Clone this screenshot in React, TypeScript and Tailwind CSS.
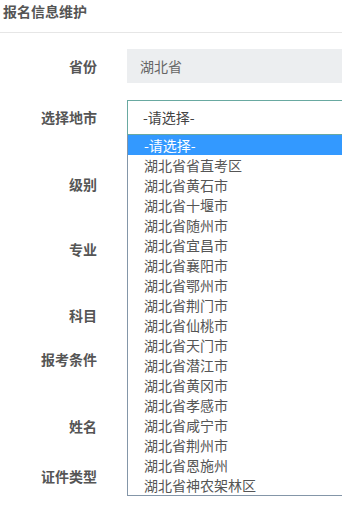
import React from "react";

const cities = [
  "湖北省省直考区",
  "湖北省黄石市",
  "湖北省十堰市",
  "湖北省随州市",
  "湖北省宜昌市",
  "湖北省襄阳市",
  "湖北省鄂州市",
  "湖北省荆门市",
  "湖北省仙桃市",
  "湖北省天门市",
  "湖北省潜江市",
  "湖北省黄冈市",
  "湖北省孝感市",
  "湖北省咸宁市",
  "湖北省荆州市",
  "湖北省恩施州",
  "湖北省神农架林区",
];

const font = { fontFamily: '"Noto Sans CJK SC", "Noto Sans", sans-serif' };

function Label({ children }: { children: React.ReactNode }) {
  return (
    <div className="w-[97px] shrink-0 text-right text-[14px] font-bold text-[#555]">
      {children}
    </div>
  );
}

export default function App() {
  return (
    <div className="w-[342px] h-[505px] bg-white overflow-hidden relative" style={font}>
      {/* Header */}
      <div className="h-[33px] border-b border-[#e6e6e6] pl-[3px] pt-[1px] text-[14px] font-bold text-[#555] leading-[20px]">
        报名信息维护
      </div>

      {/* Form */}
      <div className="flex flex-col">
        <div className="flex items-center gap-[30px] mt-[16px] h-[34px]">
          <Label>省份</Label>
          <div className="w-[240px] h-[34px] shrink-0 bg-[#eceef0] pl-[13px] flex items-center text-[14px] text-[#666]">
            湖北省
          </div>
        </div>

        <div className="flex items-center gap-[30px] mt-[17px] h-[35px]">
          <Label>选择地市</Label>
          <div className="relative w-[240px] h-[35px] shrink-0">
            <div className="h-full border border-[#69a9a1] pl-[15px] flex items-center text-[14px] text-[#444]">
              -请选择-
            </div>
            <ul className="absolute left-0 top-full z-10 w-[260px] bg-white border-l border-b border-[#8496a8] text-[14px] text-[#555]">
              <li className="h-[20px] leading-[20px] pl-[16px] bg-[#3399ff] text-white">-请选择-</li>
              {cities.map((c) => (
                <li key={c} className="h-[20px] leading-[20px] pl-[16px]">
                  {c}
                </li>
              ))}
            </ul>
          </div>
        </div>

        <div className="flex items-center gap-[30px] mt-[32px] h-[34px]">
          <Label>级别</Label>
        </div>
        <div className="flex items-center gap-[30px] mt-[31px] h-[34px]">
          <Label>专业</Label>
        </div>
        <div className="flex items-center gap-[30px] mt-[32px] h-[34px]">
          <Label>科目</Label>
        </div>
        <div className="flex items-center gap-[30px] mt-[10px] h-[34px]">
          <Label>报考条件</Label>
        </div>
        <div className="flex items-center gap-[30px] mt-[33px] h-[34px]">
          <Label>姓名</Label>
        </div>
        <div className="flex items-center gap-[30px] mt-[16px] h-[34px]">
          <Label>证件类型</Label>
        </div>
      </div>
    </div>
  );
}
